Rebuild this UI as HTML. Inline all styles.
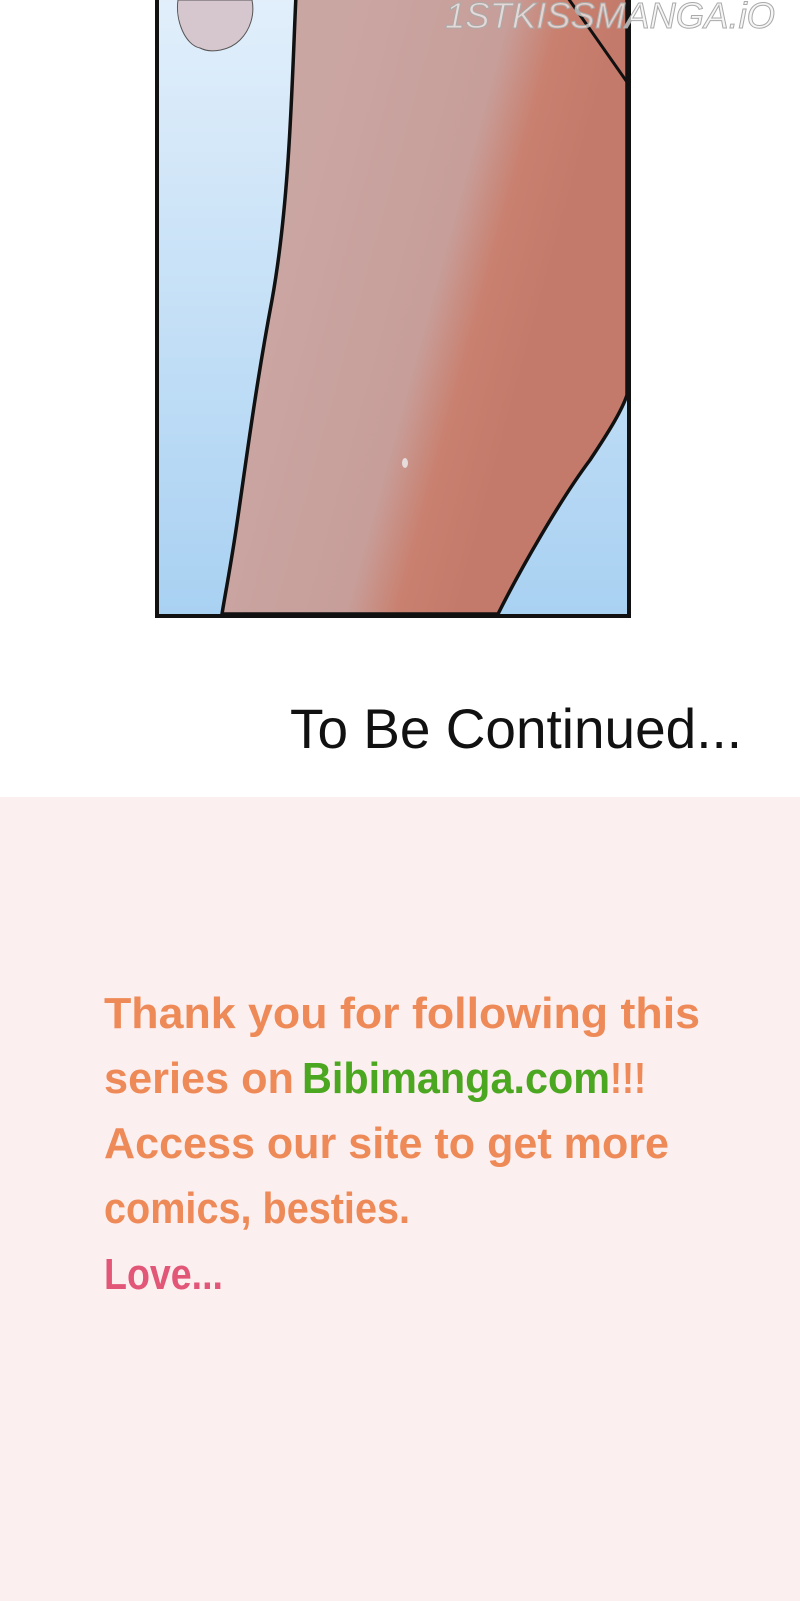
<!DOCTYPE html>
<html><head><meta charset="utf-8"><style>
html,body{margin:0;padding:0;width:800px;height:1601px;overflow:hidden;background:#fff}
</style></head><body>
<svg width="800" height="1601" viewBox="0 0 800 1601" xmlns="http://www.w3.org/2000/svg">
<defs>
<linearGradient id="sky" x1="0" y1="0" x2="0" y2="1">
<stop offset="0" stop-color="#e2effb"/><stop offset="1" stop-color="#a9d1f2"/>
</linearGradient>
<linearGradient id="skin" x1="0.3" y1="0" x2="0.9" y2="0.25">
<stop offset="0" stop-color="#caa6a3"/><stop offset="0.6" stop-color="#c79e99"/>
<stop offset="0.78" stop-color="#c9806f"/><stop offset="1" stop-color="#c47a6a"/>
</linearGradient>
</defs>
<rect x="0" y="0" width="800" height="797" fill="#fff"/>
<rect x="159" y="-5" width="468" height="619" fill="url(#sky)"/>
<path d="M296 -5 C292 80 290 200 272 300 C255 390 245 470 236 530 C230 570 225 595 222 614 L498 614 C520 570 560 500 590 460 C610 430 622 410 627 395 L627 -5 Z" fill="url(#skin)" stroke="#111" stroke-width="3.5"/>
<path d="M568 -2 L627 82" stroke="#111" stroke-width="3" fill="none"/>
<path d="M178 0 C175 20 185 45 200 48 C212 54 230 50 240 40 C250 30 255 15 252 0 Z" fill="#d6c7cf" stroke="#555" stroke-width="1"/>
<ellipse cx="405" cy="463" rx="3" ry="5" fill="#e6dcdc"/>
<rect x="157" y="-5" width="472" height="621" fill="none" stroke="#111" stroke-width="4"/>
<text x="445" y="28" font-family="Liberation Sans, sans-serif" font-style="italic" font-size="36" fill="#f2f2f2" fill-opacity="0.7" stroke="#aaa" stroke-width="1" textLength="330" lengthAdjust="spacingAndGlyphs">1STKISSMANGA.iO</text>
<text x="290" y="748" font-family="Liberation Sans, sans-serif" font-size="56" fill="#111" textLength="452" lengthAdjust="spacingAndGlyphs">To Be Continued...</text>
<rect x="0" y="797" width="800" height="804" fill="#fcefef"/>
<g font-family="Liberation Sans, sans-serif" font-weight="bold" font-size="44" fill="#ee8a58">
<text x="104" y="1028" textLength="596" lengthAdjust="spacingAndGlyphs">Thank you for following this</text>
<text x="104" y="1093" textLength="190" lengthAdjust="spacingAndGlyphs">series on</text>
<text x="302" y="1093" fill="#4ba620" textLength="308" lengthAdjust="spacingAndGlyphs">Bibimanga.com</text>
<text x="610" y="1093" textLength="36" lengthAdjust="spacingAndGlyphs">!!!</text>
<text x="104" y="1158" textLength="565" lengthAdjust="spacingAndGlyphs">Access our site to get more</text>
<text x="104" y="1223" textLength="306" lengthAdjust="spacingAndGlyphs">comics, besties.</text>
<text x="104" y="1289" fill="#e25677" textLength="119" lengthAdjust="spacingAndGlyphs">Love...</text>
</g>
</svg>
</body></html>
